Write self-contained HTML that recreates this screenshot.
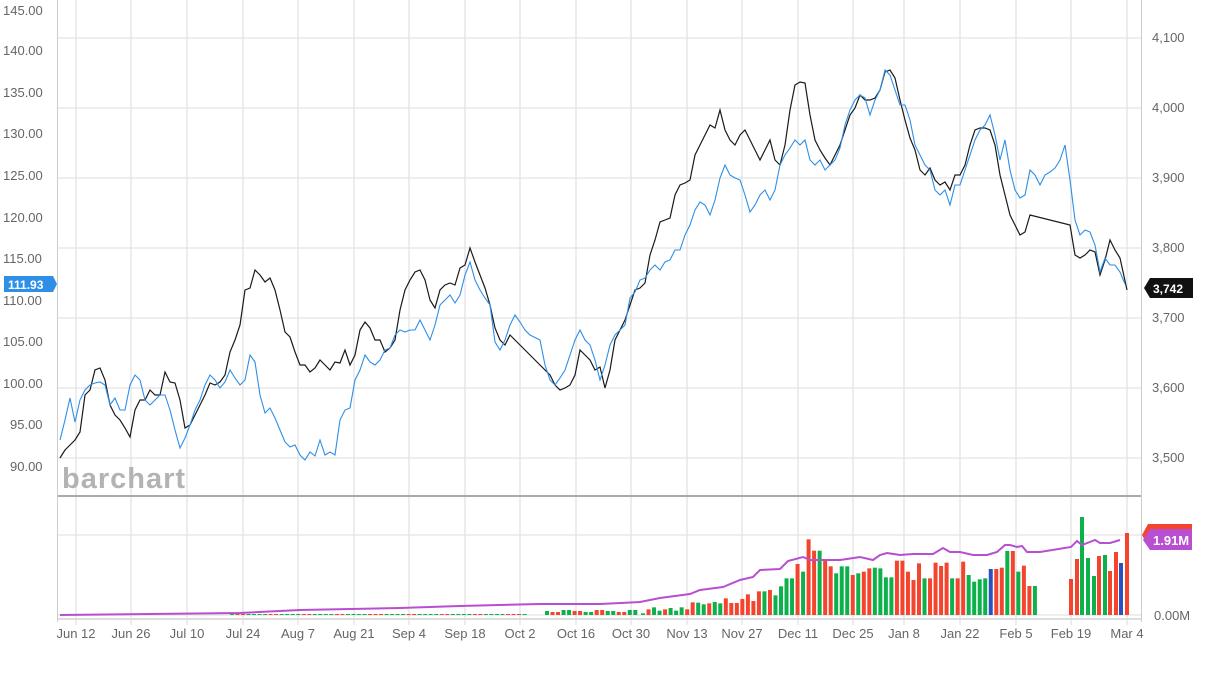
<!DOCTYPE html>
<html><head><meta charset="utf-8"><style>
body{margin:0;background:#fff;width:1213px;height:670px;overflow:hidden}
svg text{font-family:"Liberation Sans",sans-serif;font-size:13px;fill:#666}
</style></head><body>
<svg id="s" width="1213" height="670" xmlns="http://www.w3.org/2000/svg">
<g stroke="#e3e3e3" stroke-width="1.3">
<line x1="58" y1="38" x2="1141" y2="38"/><line x1="58" y1="108" x2="1141" y2="108"/><line x1="58" y1="178" x2="1141" y2="178"/><line x1="58" y1="248" x2="1141" y2="248"/><line x1="58" y1="318" x2="1141" y2="318"/><line x1="58" y1="388" x2="1141" y2="388"/><line x1="58" y1="458" x2="1141" y2="458"/>
<line x1="58" y1="535" x2="1141" y2="535"/><line x1="58" y1="615" x2="1141" y2="615"/>
<g id="vg"></g>
</g>
<line x1="57.5" y1="0" x2="57.5" y2="622" stroke="#ccc"/>
<line x1="1141.5" y1="0" x2="1141.5" y2="622" stroke="#ccc"/>
<line x1="58" y1="496" x2="1141" y2="496" stroke="#aaa" stroke-width="2"/>
<line x1="58" y1="619" x2="1141" y2="619" stroke="#ddd" stroke-width="2"/>
<text x="3" y="15">145.00</text><text x="3" y="55">140.00</text><text x="3" y="97">135.00</text><text x="3" y="138">130.00</text><text x="3" y="180">125.00</text><text x="3" y="222">120.00</text><text x="3" y="263">115.00</text><text x="3" y="305">110.00</text><text x="3" y="346">105.00</text><text x="3" y="388">100.00</text><text x="10" y="429">95.00</text><text x="10" y="471">90.00</text>
<text x="1152" y="42">4,100</text><text x="1152" y="112">4,000</text><text x="1152" y="182">3,900</text><text x="1152" y="252">3,800</text><text x="1152" y="322">3,700</text><text x="1152" y="392">3,600</text><text x="1152" y="462">3,500</text>
<text x="1154" y="620">0.00M</text>
<text x="62" y="488" style="font-size:29px;font-weight:bold;fill:#b3b3b3;letter-spacing:1px">barchart</text>
<g id="dates"></g>
<polyline fill="none" stroke="#1a1a1a" stroke-width="1.2" points="60,458 65,450 70,445 75,440 80,432 85,395 90,390 95,370 100,368 105,380 110,405 115,415 120,420 125,428 130,437 135,410 140,400 145,400 150,390 155,395 160,395 165,372 170,382 175,383 180,400 185,428 190,425 195,415 200,405 205,395 210,383 215,385 220,382 225,375 230,352 235,340 240,325 245,290 250,288 255,270 260,275 265,282 270,278 275,290 280,310 285,332 290,337 295,352 300,365 305,365 310,372 315,368 320,360 325,365 330,370 335,362 340,363 345,350 350,365 355,355 360,330 365,322 370,328 375,340 380,340 385,352 390,348 395,340 400,310 405,290 410,280 415,272 420,270 425,280 430,300 435,308 440,290 445,285 450,283 455,285 460,268 465,265 470,248 475,262 480,275 485,288 490,305 495,328 500,340 505,345 510,335 520,345 530,355 540,365 550,375 555,385 560,390 565,388 570,385 575,375 580,350 585,355 590,360 595,370 600,367 605,388 610,370 615,340 620,330 625,320 630,305 635,290 640,288 645,283 650,255 655,240 660,222 665,220 670,218 675,195 680,185 685,183 690,180 695,155 700,145 705,135 710,125 715,128 720,110 725,130 730,140 735,145 740,135 745,130 750,140 755,150 760,160 765,150 770,140 775,160 780,165 785,145 790,110 795,85 800,82 805,83 810,115 815,140 820,150 825,158 830,165 835,155 840,145 845,130 850,115 855,108 860,95 865,100 870,100 875,98 880,90 885,72 890,70 895,78 900,100 905,120 910,138 915,150 920,170 925,175 930,168 935,180 940,185 945,182 950,190 955,175 960,175 965,165 970,145 975,130 980,128 985,128 990,130 995,145 1000,175 1005,195 1010,215 1015,225 1020,235 1025,232 1030,215 1070,225 1075,255 1080,258 1085,255 1090,250 1095,252 1100,275 1105,260 1110,240 1115,250 1120,258 1127,290"/>
<polyline fill="none" stroke="#2e8fe6" stroke-width="1.1" points="60,440 65,420 70,398 75,422 80,400 85,390 90,385 95,383 100,382 105,385 110,405 115,398 120,410 125,410 130,385 135,375 140,380 145,400 150,405 155,400 160,395 165,395 170,410 175,430 180,448 185,438 190,425 195,410 200,400 205,385 210,375 215,380 220,388 225,382 230,370 235,378 240,385 245,380 250,355 255,362 260,395 265,413 270,408 275,418 280,430 285,442 290,447 295,445 300,455 305,460 310,452 315,456 320,440 325,455 330,452 335,455 340,420 345,410 350,408 355,380 360,370 365,355 370,362 375,365 380,360 385,350 390,348 395,335 400,330 405,332 410,330 415,330 420,320 425,330 430,340 435,325 440,305 445,300 450,295 455,303 460,295 465,275 470,262 475,280 480,290 485,298 490,305 495,342 500,350 505,340 510,325 515,315 520,322 525,330 530,335 540,340 545,365 550,380 555,385 560,378 565,370 570,355 575,340 580,330 585,340 590,345 595,360 600,380 605,365 610,345 615,335 620,330 625,325 630,298 635,292 640,280 645,278 650,270 655,265 660,270 665,262 670,260 675,250 680,250 685,235 690,225 695,210 700,202 705,205 710,215 715,200 720,178 725,165 730,175 735,178 740,180 745,195 750,212 755,205 760,195 765,190 770,200 775,190 780,165 785,155 790,148 795,140 800,145 805,140 810,160 815,165 820,160 825,170 830,165 835,160 840,148 845,125 850,110 855,100 860,95 865,98 870,115 875,100 880,90 885,70 890,75 895,90 900,105 905,105 910,120 915,145 920,155 925,165 930,170 935,190 940,195 945,190 950,205 955,185 960,185 965,170 970,155 975,140 980,130 985,125 990,115 995,135 1000,160 1005,140 1010,170 1015,190 1020,198 1025,195 1030,170 1035,175 1040,185 1045,175 1050,172 1055,168 1060,160 1065,145 1070,180 1075,220 1080,235 1085,230 1090,232 1095,245 1100,272 1105,258 1110,265 1115,265 1120,272 1125,284"/>
<g id="bars"></g>
<polyline fill="none" stroke="#b84fd1" stroke-width="2" points="60,615 150,614 240,613 300,610 400,608 460,606 540,604 600,604 640,602 660,598 690,594 700,590 723,587 740,580 753,577 760,570 780,569 788,561 803,557 810,560 840,560 847,559 860,557 873,560 880,555 887,553 900,555 913,554 933,554 943,548 950,552 960,552 973,555 987,555 997,552 1005,545 1010,545 1017,547 1022,546 1027,552 1040,552 1071,547 1077,541 1082,545 1095,540 1100,543 1110,543 1120,540"/>
<path d="M1148,524 H1192 V546 H1148 L1142,535 Z" fill="#f4442e"/>
<path d="M1150,529 H1192 V550 H1150 L1143,540 Z" fill="#b84fd1"/>
<text x="1153" y="545" style="fill:#fff;font-weight:bold;font-size:13px">1.91M</text>
<path d="M4,276 H53 L57,284 L53,292 H4 Z" fill="#2e8fe6"/>
<text x="8" y="289" style="fill:#fff;font-weight:bold;font-size:12px">111.93</text>
<path d="M1150,278 H1193 V298 H1150 L1144,288 Z" fill="#111"/>
<text x="1153" y="293" style="fill:#fff;font-weight:bold;font-size:12px">3,742</text>
</svg>
<script>
var ns="http://www.w3.org/2000/svg",vg=document.getElementById('vg'),dg=document.getElementById('dates'),bg=document.getElementById('bars');
var xs=[76,131,187,243,298,354,409,465,520,576,631,687,742,798,853,904,960,1016,1071,1127];
var ls=["Jun 12","Jun 26","Jul 10","Jul 24","Aug 7","Aug 21","Sep 4","Sep 18","Oct 2","Oct 16","Oct 30","Nov 13","Nov 27","Dec 11","Dec 25","Jan 8","Jan 22","Feb 5","Feb 19","Mar 4"];
xs.forEach(function(x,i){var l=document.createElementNS(ns,'line');l.setAttribute('x1',x);l.setAttribute('x2',x);l.setAttribute('y1',0);l.setAttribute('y2',625);vg.appendChild(l);
var t=document.createElementNS(ns,'text');t.setAttribute('x',x);t.setAttribute('y',638);t.setAttribute('text-anchor','middle');t.textContent=ls[i];dg.appendChild(t);});
var C={r:'#f4442e',g:'#0db14b',b:'#2a52be'};
function bar(x,top,c){var r=document.createElementNS(ns,'rect');r.setAttribute('x',x-2);r.setAttribute('y',top);r.setAttribute('width',4);r.setAttribute('height',615-top);r.setAttribute('fill',C[c]);bg.appendChild(r);}
for(var x=232;x<525;x+=5.52){bar(x,614,((x|0)%3)?'g':'r');}
for(var x=547;x<638;x+=5.52){bar(x,612-((x|0)%3),((x|0)%2)?'g':'r');}
var d="280g 268r 262g 272g 268r 264g 272g 262g 268r 247r 248g 253g 250r 246g 250g 235r 249r 249r 237r 223r 243r 214r 214g 210r 226g 199g 175g 175g 132r 155g 58r 92r 92g 123r 139r 160g 139g 139g 165r 160g 155r 145r 143g 145g 172g 172g 122r 122r 155r 180r 130r 175g 175r 128r 138r 128r 175g 175r 125r 165g 185g 178g 175g 147b 147r 143r 93g 93r 155g 137r 198r 198g".split(" ");
d.forEach(function(s,i){bar(643+i*5.52,520+parseInt(s)/3,s.slice(-1));});
[[1071,579,'r'],[1077,559,'r'],[1082,517,'g'],[1088,558,'g'],[1094,576,'g'],[1099,556,'r'],[1105,555,'g'],[1110,571,'r'],[1116,552,'r'],[1121,563,'b'],[1127,533,'r']].forEach(function(b){bar(b[0],b[1],b[2]);});
</script>
</body></html>
